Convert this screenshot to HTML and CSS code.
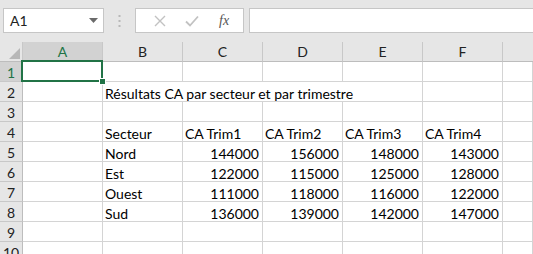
FILE: index.html
```html
<!DOCTYPE html>
<html lang="fr">
<head>
    <meta charset="UTF-8">
    <title>Classeur</title>
    <link rel="stylesheet" href="styles.css">
</head>
<body>
    <div class="toolbar">
        <div class="namebox">
            <span>A1</span>
            <svg width="9" height="5" viewBox="0 0 9 5"><path d="M0 0 H9 L4.5 5 Z" fill="#6a6a6a"/></svg>
        </div>
        <div class="grip">
            <svg width="3" height="12" viewBox="0 0 3 12"><rect x="0.5" y="0" width="2" height="2" fill="#b8b8b8"/><rect x="0.5" y="5" width="2" height="2" fill="#b8b8b8"/><rect x="0.5" y="10" width="2" height="2" fill="#b8b8b8"/></svg>
        </div>
        <div class="fx-buttons">
            <svg width="12" height="12" viewBox="0 0 12 12"><path d="M1 1 L11 11 M11 1 L1 11" stroke="#c2c2c2" stroke-width="1.4"/></svg>
            <svg width="14" height="12" viewBox="0 0 14 12"><path d="M1 6.5 L5 10.5 L13 1.5" stroke="#c2c2c2" stroke-width="1.8" fill="none"/></svg>
            <span class="fx">fx</span>
        </div>
        <div class="formula-input"></div>
    </div>

    <div class="sheet">
        <div class="corner"><svg width="11" height="11" viewBox="0 0 11 11"><path d="M11 0 V11 H0 Z" fill="#b7b7b7"/></svg></div>
        <div class="col-head active">A</div>
        <div class="col-head">B</div>
        <div class="col-head">C</div>
        <div class="col-head">D</div>
        <div class="col-head">E</div>
        <div class="col-head">F</div>
        <div class="col-head last"></div>

        <div class="row-head active">1</div>
        <div class="cell selected"><span class="handle"></span></div><div class="cell"></div><div class="cell"></div><div class="cell"></div><div class="cell"></div><div class="cell"></div><div class="cell"></div>

        <div class="row-head">2</div>
        <div class="cell"></div><div class="cell overflow">Résultats CA par secteur et par trimestre</div><div class="cell no-line"></div><div class="cell no-line"></div><div class="cell"></div><div class="cell"></div><div class="cell"></div>

        <div class="row-head">3</div>
        <div class="cell"></div><div class="cell"></div><div class="cell"></div><div class="cell"></div><div class="cell"></div><div class="cell"></div><div class="cell"></div>

        <div class="row-head">4</div>
        <div class="cell"></div><div class="cell">Secteur</div><div class="cell">CA Trim1</div><div class="cell">CA Trim2</div><div class="cell">CA Trim3</div><div class="cell">CA Trim4</div><div class="cell"></div>

        <div class="row-head">5</div>
        <div class="cell"></div><div class="cell">Nord</div><div class="cell num">144000</div><div class="cell num">156000</div><div class="cell num">148000</div><div class="cell num">143000</div><div class="cell"></div>

        <div class="row-head">6</div>
        <div class="cell"></div><div class="cell">Est</div><div class="cell num">122000</div><div class="cell num">115000</div><div class="cell num">125000</div><div class="cell num">128000</div><div class="cell"></div>

        <div class="row-head">7</div>
        <div class="cell"></div><div class="cell">Ouest</div><div class="cell num">111000</div><div class="cell num">118000</div><div class="cell num">116000</div><div class="cell num">122000</div><div class="cell"></div>

        <div class="row-head">8</div>
        <div class="cell"></div><div class="cell">Sud</div><div class="cell num">136000</div><div class="cell num">139000</div><div class="cell num">142000</div><div class="cell num">147000</div><div class="cell"></div>

        <div class="row-head">9</div>
        <div class="cell"></div><div class="cell"></div><div class="cell"></div><div class="cell"></div><div class="cell"></div><div class="cell"></div><div class="cell"></div>

        <div class="row-head">10</div>
        <div class="cell"></div><div class="cell"></div><div class="cell"></div><div class="cell"></div><div class="cell"></div><div class="cell"></div><div class="cell"></div>
    </div>
</body>
</html>
```

FILE: styles.css
```css
body {
    margin: 0;
    width: 533px;
    height: 254px;
    overflow: hidden;
    background: #ffffff;
    font-family: Lato, "Open Sans", sans-serif;
}
.toolbar {
    display: flex;
    align-items: center;
    height: 42px;
    padding: 0 0 1px 3px;
    box-sizing: border-box;
    background: #e6e6e6;
}
.namebox {
    display: flex;
    align-items: center;
    justify-content: space-between;
    width: 101px;
    height: 25px;
    box-sizing: border-box;
    padding: 0 5px 0 6px;
    background: #ffffff;
    border: 1px solid #c6c6c6;
    font-size: 14px;
    color: #222222;
}
.grip {
    display: flex;
    width: 31px;
    justify-content: center;
}
.fx-buttons {
    display: flex;
    align-items: center;
    justify-content: space-around;
    width: 109px;
    height: 25px;
    box-sizing: border-box;
    padding: 0 4px 0 8px;
    background: #ffffff;
    border: 1px solid #c6c6c6;
}
.fx {
    font-family: "Liberation Serif", serif;
    font-style: italic;
    font-size: 14px;
    color: #555555;
}
.formula-input {
    flex: 1;
    height: 25px;
    margin-left: 5px;
    box-sizing: border-box;
    background: #ffffff;
    border: 1px solid #c6c6c6;
    border-right: none;
}
.sheet {
    display: grid;
    grid-template-columns: 23px repeat(6, 80px) 1fr;
    grid-auto-rows: 20px;
    font-size: 14px;
    color: #000000;
}
.corner, .col-head, .row-head {
    background: #e6e6e6;
    box-sizing: border-box;
    display: flex;
    align-items: center;
    justify-content: center;
    color: #222222;
    font-size: 14px;
}
.corner {
    border-right: 1px solid #c8c8c8;
    border-bottom: 1px solid #bdbdbd;
    align-items: flex-end;
    justify-content: flex-end;
    padding: 0 2px 2px 0;
}
.col-head {
    border-right: 1px solid #c8c8c8;
    border-bottom: 1px solid #bdbdbd;
}
.col-head.last {
    border-right: none;
}
.row-head {
    border-right: 1px solid #bdbdbd;
    border-bottom: 1px solid #c8c8c8;
    padding-top: 2px;
}
.col-head.active, .row-head.active {
    background: #d2d2d2;
    color: #217346;
}
.col-head.active {
    border-bottom: 2px solid #217346;
}
.cell {
    position: relative;
    box-sizing: border-box;
    border-right: 1px solid #d4d4d4;
    border-bottom: 1px solid #d4d4d4;
    padding: 0 3px 0 2px;
    display: flex;
    align-items: flex-end;
    line-height: 15px;
    white-space: nowrap;
}
.cell.num {
    justify-content: flex-end;
}
.cell.overflow {
    border-right: none;
    overflow: visible;
    z-index: 1;
}
.cell.no-line {
    border-right: none;
}
.cell.selected::after {
    content: "";
    position: absolute;
    left: -2px;
    top: -2px;
    right: -1px;
    bottom: -1px;
    border: 2px solid #217346;
}
.handle {
    position: absolute;
    right: -4px;
    bottom: -4px;
    width: 5px;
    height: 5px;
    background: #217346;
    border: 1px solid #ffffff;
    z-index: 2;
}
```
